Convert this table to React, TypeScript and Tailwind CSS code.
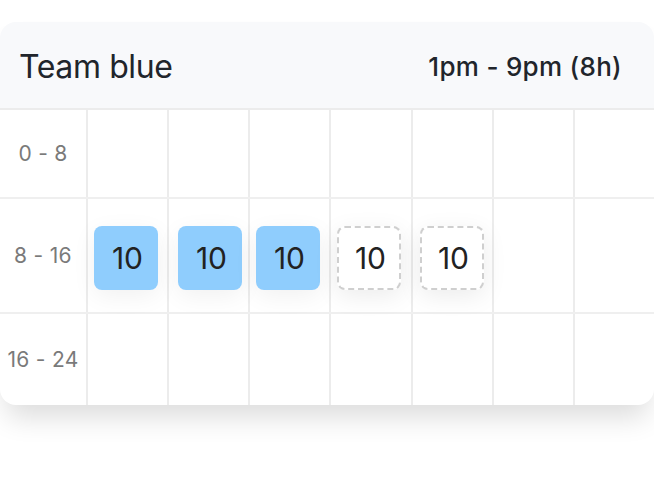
export default function App() {
  const rows = [
    { label: "0 - 8", h: "h-[89px]" },
    { label: "8 - 16", h: "h-[115px]" },
    { label: "16 - 24", h: "h-[91px]" },
  ];
  const cols = [0, 1, 2, 3, 4, 5, 6];

  return (
    <div className="w-[654px] h-[498px] bg-white pt-[22px] font-['Inter',sans-serif] overflow-hidden">
      <div className="w-[654px] rounded-2xl bg-white shadow-[0_18px_28px_-6px_rgba(0,0,0,0.14)] overflow-hidden">
        <div className="h-[88px] bg-[#f8f9fb] border-b-2 border-[#ececec] flex items-center justify-between pl-[19px] pr-[32px] pt-[3px]">
          <span className="text-[32px] text-[#21252b] tracking-[-0.4px]">Team blue</span>
          <span className="text-[26px] font-medium text-[#21252b] tracking-[0.3px]">1pm - 9pm (8h)</span>
        </div>
        <div className="relative">
          {rows.map((row, i) => (
            <div key={row.label} className={`flex ${row.h} ${i < 2 ? "border-b-2 border-[#efefef]" : ""}`}>
              <div className="w-[86px] flex items-center justify-center text-[21px] text-[#7a7a7a] tracking-[0.3px]">
                {row.label}
              </div>
              {cols.map((c) => (
                <div key={c} className="flex-1 border-l-2 border-[#ececec]" />
              ))}
            </div>
          ))}
          <div className="absolute left-[94px] top-[116px] flex items-center">
            <Chip filled />
            <div className="w-5" />
            <Chip filled />
            <div className="w-[14px]" />
            <Chip filled />
            <div className="w-[17px]" />
            <Chip />
            <div className="w-[19px]" />
            <Chip />
          </div>
        </div>
      </div>
    </div>
  );
}

function Chip({ filled }: { filled?: boolean }) {
  return filled ? (
    <div className="w-16 h-16 rounded-lg bg-[#8fcdfd] flex items-center justify-center pl-[3px] text-[30px] text-[#222] shadow-[0_6px_24px_rgba(0,0,0,0.06)]">
      10
    </div>
  ) : (
    <div className="w-16 h-16 rounded-lg bg-white border-2 border-dashed border-[#cfcfcf] flex items-center justify-center pl-[3px] text-[30px] text-[#222] shadow-[0_6px_24px_rgba(0,0,0,0.08)]">
      10
    </div>
  );
}
